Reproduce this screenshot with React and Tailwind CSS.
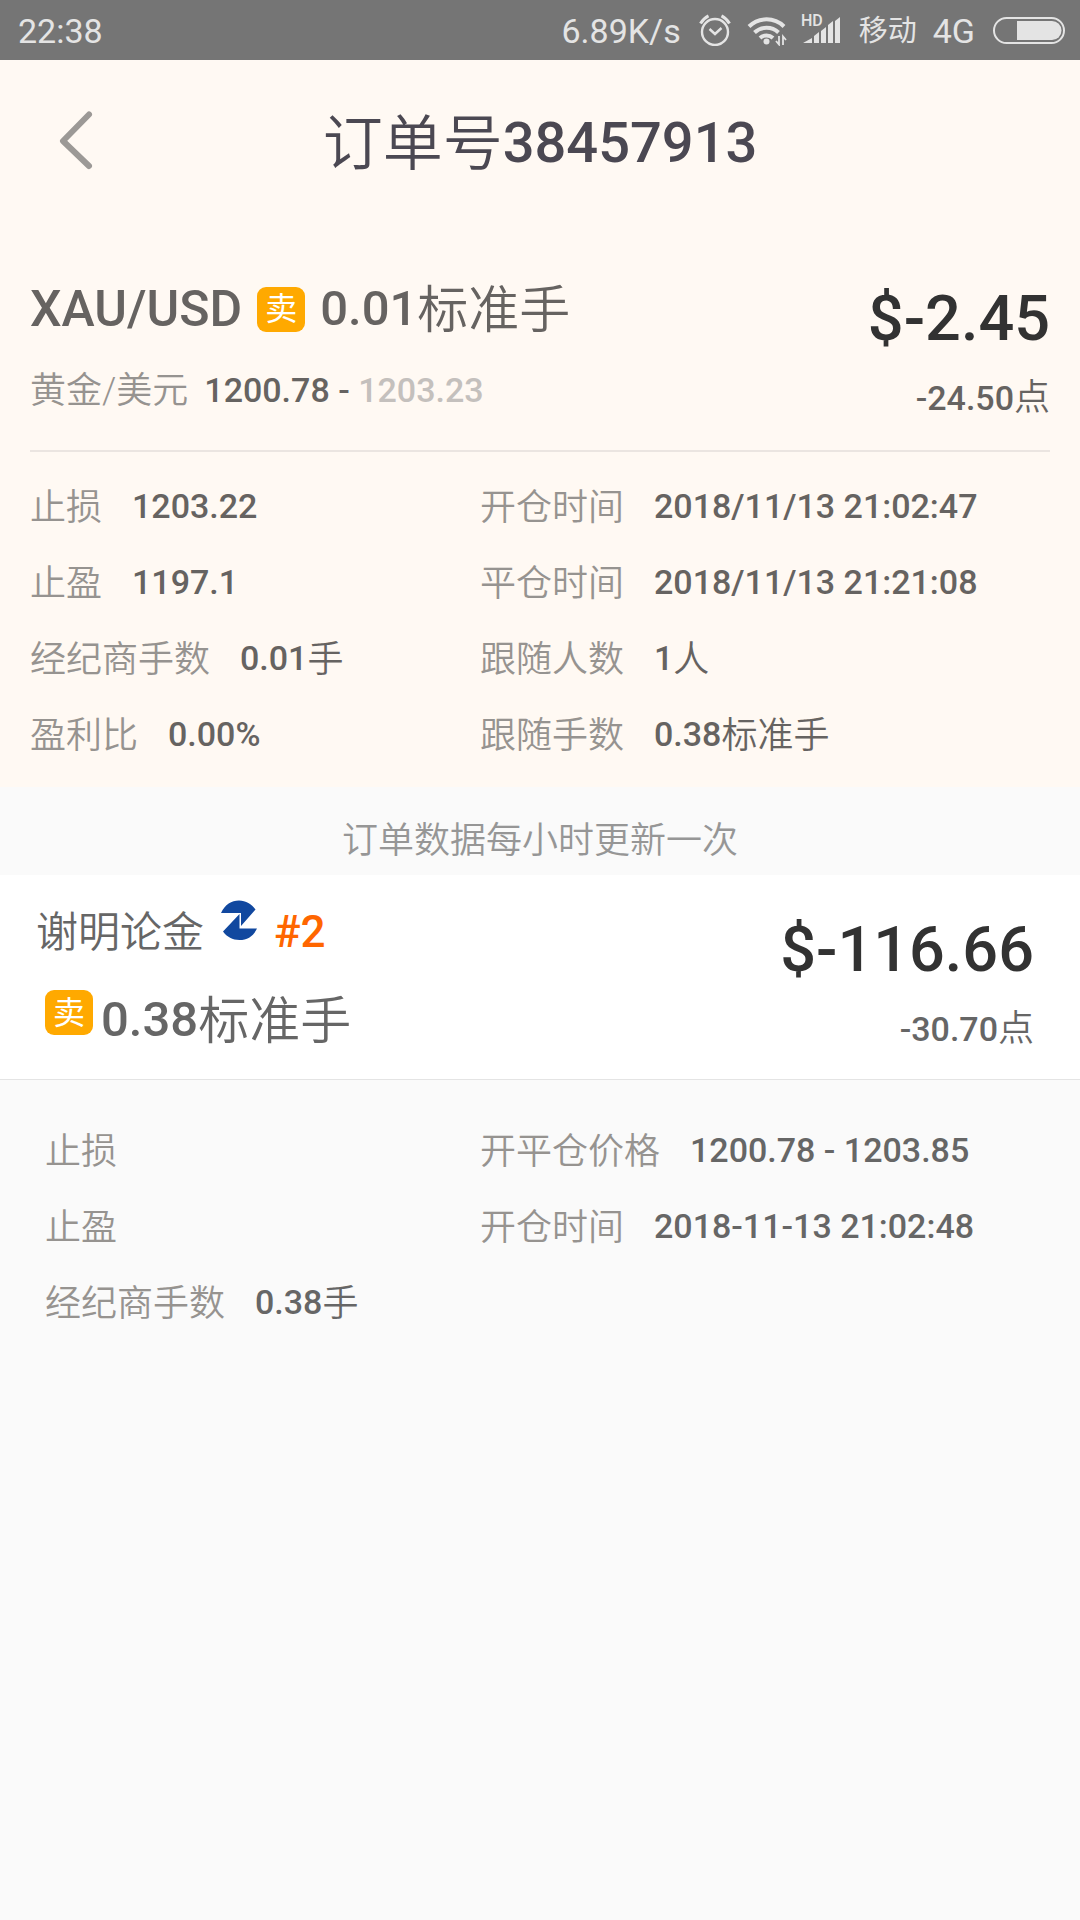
import React from "react";

const summaryRows = [
  { label: "止损", value: "1203.22" },
  { label: "开仓时间", value: "2018/11/13 21:02:47" },
  { label: "止盈", value: "1197.1" },
  { label: "平仓时间", value: "2018/11/13 21:21:08" },
  { label: "经纪商手数", value: "0.01", unit: "手" },
  { label: "跟随人数", value: "1", unit: "人" },
  { label: "盈利比", value: "0.00%" },
  { label: "跟随手数", value: "0.38", unit: "标准手" },
];

const followerRows = [
  { label: "止损" },
  { label: "开平仓价格", value: "1200.78 - 1203.85" },
  { label: "止盈" },
  { label: "开仓时间", value: "2018-11-13 21:02:48" },
  { label: "经纪商手数", value: "0.38", unit: "手" },
];

const AlarmIcon = () => (
  <svg className="w-8 h-8" viewBox="0 0 32 32" fill="none" stroke="currentColor" aria-hidden="true">
    <circle cx="16" cy="18" r="13" strokeWidth="2.4" />
    <path d="M10.5 15l5.500 5 6.500-6" strokeWidth="2.4" />
    <path d="M1.500 9.500C3.500 6 6 3.500 9.500 1.800M30.500 9.500C28.500 6 26 3.500 22.500 1.800" strokeWidth="3" />
  </svg>
);

const WifiIcon = () => (
  <svg className="w-10 h-8" viewBox="0 0 40 32" fill="none" stroke="currentColor" aria-hidden="true">
    <path d="M2 12.500a25 25 0 0 1 35 0" strokeWidth="4" />
    <path d="M7.500 18.500a17.500 17.500 0 0 1 24 0" strokeWidth="4" />
    <path d="M13 24a9.500 9.500 0 0 1 13 0" strokeWidth="4" />
    <circle cx="19.500" cy="27.500" r="3" fill="currentColor" stroke="none" />
    <path d="M32 22v8.500l-3-3.500M36 31v-8.500l3 3.500" strokeWidth="1.800" />
  </svg>
);

const SignalIcon = () => (
  <svg className="w-10 h-10" viewBox="0 0 40 40" fill="currentColor" aria-hidden="true">
    <text x="0" y="16" fontSize="16" fontWeight="500" fontFamily="Roboto, sans-serif">HD</text>
    <path d="M2 33l9-5v5zM13 26l5-4v11h-5zM20 21l5-4v16h-5zM27 15l5-4v22h-5zM34 11l5-4v26h-5z" />
  </svg>
);

const BatteryIcon = () => (
  <svg className="w-[72px] h-[27px]" viewBox="0 0 72 27" aria-hidden="true">
    <rect x="1" y="1" width="70" height="25" rx="12.500" fill="none" stroke="currentColor" strokeWidth="2" />
    <path d="M24 4h35a9.500 9.500 0 0 1 0 19H24z" fill="currentColor" />
  </svg>
);

const BrokerLogo = () => (
  <svg className="w-9 h-10" viewBox="0 0 36 40" fill="#11489f" aria-hidden="true">
    <path d="M0 13C4 4.500 10.500.500 18 .500c7 0 12.500 3.500 16.500 9L20 26V13z" />
    <path d="M18.500 14v14.500H36c-3.500 7.500-9.500 11.500-17.500 11.500-7 0-12.500-3-16.500-8.500z" />
  </svg>
);

const StatusBar = () => (
  <div className="h-[60px] pl-[18px] pr-[15px] flex items-center justify-between bg-[#757575] text-[#e4e4e4] text-[34px] font-normal">
    <span className="mt-0.5">22:38</span>
    <div className="flex items-center">
      <span className="mr-[18px] mt-0.5">6.89K/s</span>
      <AlarmIcon />
      <span className="ml-4 mr-3.5">
        <WifiIcon />
      </span>
      <SignalIcon />
      <span className="ml-[18px] mt-1 text-[29px]">移动</span>
      <span className="ml-4 mr-[18px] mt-0.5">4G</span>
      <BatteryIcon />
    </div>
  </div>
);

const SellBadge = () => (
  <span className="w-12 h-[45px] flex items-center justify-center rounded-[9px] bg-[#ffa900] text-white text-[32px] leading-none font-normal">
    卖
  </span>
);

const Lots = ({ value }) => (
  <span className="flex items-center text-[49px] font-medium">
    {value}
    <span className="mt-1 text-[51px] leading-[60px] font-[350]">标准手</span>
  </span>
);

const Profit = ({ amount, points }) => (
  <div className="text-right">
    <div className="text-[63px] leading-[80px] font-medium text-[#323232]">{amount}</div>
    <div className="mt-3.5 text-[34px] leading-[50px] font-medium">
      {points}
      <span className="text-[36px] font-[350]">点</span>
    </div>
  </div>
);

const DetailItem = ({ label, value, unit }) => (
  <div className="h-[76px] flex items-center gap-[30px] text-[36px]">
    <dt className="mt-1 font-[350] text-[#969390]">{label}</dt>
    <dd className="flex items-center text-[34px] font-medium">
      {value}
      {unit && <span className="mt-1 text-[36px] font-[350]">{unit}</span>}
    </dd>
  </div>
);

const DetailGrid = ({ rows, className }) => (
  <dl className={`grid grid-cols-[4fr_5fr] ${className}`}>
    {rows.map((row) => (
      <DetailItem key={row.label} {...row} />
    ))}
  </dl>
);

const App = () => {
  return (
    <div className="min-h-screen bg-[#fafafa] font-['Roboto','Noto_Sans_CJK_SC',sans-serif] text-[#666361] whitespace-nowrap">
      <StatusBar />

      <main>
        <section className="bg-[#fff9f3]">
          <header className="relative h-[166px] flex items-center justify-center">
            <button type="button" aria-label="返回" className="absolute left-[58px] top-[50px] text-[#9c9996]">
              <svg className="w-9 h-[60px]" viewBox="0 0 36 60" fill="none" stroke="currentColor" strokeWidth="6" strokeLinecap="round" strokeLinejoin="round">
                <path d="M31 4.500L5 31l26 25" />
              </svg>
            </button>
            <h1 className="flex items-center text-[56px] font-medium text-[#4b4852]">
              <span className="mt-1 text-[60px] font-[350]">订单号</span>38457913
            </h1>
          </header>

          <div className="mx-[30px] pt-[53px] pb-[27px] flex justify-between border-b-2 border-[#ebe5e1]">
            <div>
              <div className="h-[60px] flex items-center gap-[15px] text-[50px] font-medium">
                <span>XAU/USD</span>
                <SellBadge />
                <Lots value="0.01" />
              </div>
              <div className="mt-[26px] h-[50px] flex items-center gap-4 text-[36px]">
                <span className="mt-0.5 font-[350] text-[#969390]">黄金/美元</span>
                <span className="text-[34px] font-medium">
                  1200.78 - <span className="text-[#c4c0bd]">1203.23</span>
                </span>
              </div>
            </div>
            <Profit amount="$-2.45" points="-24.50" />
          </div>

          <DetailGrid rows={summaryRows} className="pt-4 pb-[15px] *:odd:pl-[30px]" />
        </section>

        <p className="h-[88px] pt-5 flex items-center justify-center text-[36px] font-[350] text-[#969696]">
          订单数据每小时更新一次
        </p>

        <section className="text-[#666666]">
          <div className="pt-[35px] pb-[25px] pl-9 pr-[46px] flex justify-between bg-white border-b border-[#e4e4e4]">
            <div>
              <div className="h-11 flex items-center gap-[17px]">
                <span className="text-[42px] font-[350]">谢明论金</span>
                <span className="self-start -mt-2.5">
                  <BrokerLogo />
                </span>
                <span className="text-[44px] font-medium text-[#ff6600]">#2</span>
              </div>
              <div className="mt-9 ml-[9px] h-[60px] flex items-center gap-2">
                <span className="self-start">
                  <SellBadge />
                </span>
                <Lots value="0.38" />
              </div>
            </div>
            <Profit amount="$-116.66" points="-30.70" />
          </div>

          <DetailGrid rows={followerRows} className="pt-8 *:odd:pl-[45px]" />
        </section>
      </main>
    </div>
  );
};

export default App;
